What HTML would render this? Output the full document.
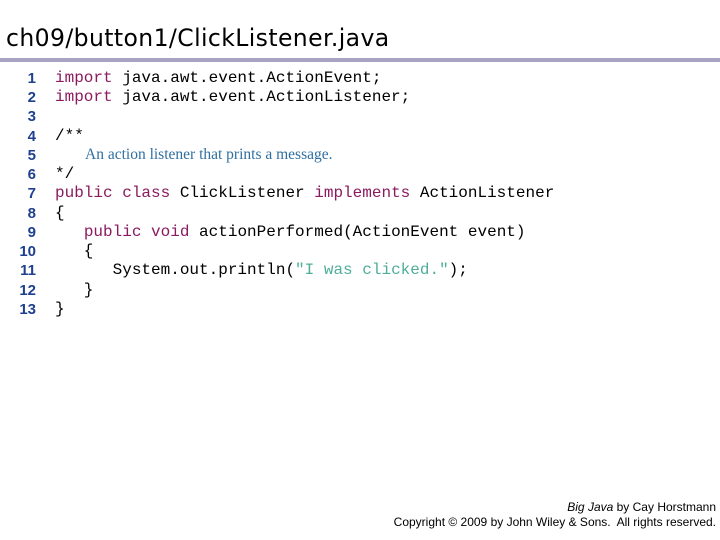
<!DOCTYPE html>
<html><head><meta charset="utf-8"><style>
body{margin:0;width:720px;height:540px;background:#fff;position:relative;overflow:hidden;font-family:"Liberation Sans",sans-serif}
.title{position:absolute;left:6px;top:24px;font-size:24px;color:#000;letter-spacing:0.4px;font-family:"DejaVu Sans","Liberation Sans",sans-serif;transform:scaleX(0.98);transform-origin:left}
.rule{position:absolute;left:0;top:58px;width:720px;height:4px;background:#a9a3c3}
.ln{position:absolute;left:0;width:36px;text-align:right;font:bold 15px "Liberation Sans",sans-serif;color:#1f3f8f}
.cd{position:absolute;left:55px;font:16px "Liberation Mono",monospace;color:#000;white-space:pre}
.k{color:#8b1a5f}.s{color:#4fae9a}
.cm{font:15.5px "Liberation Serif",serif;color:#2f6f9f}
.ft{position:absolute;right:4px;font-size:12px;color:#000;text-align:right}
</style></head><body>
<div class="title">ch09/button1/ClickListener.java</div>
<div class="rule"></div>
<div class="ln" style="top:70px">1</div><div class="cd" style="top:69px"><span class="k">import</span> java.awt.event.ActionEvent;</div>
<div class="ln" style="top:89px">2</div><div class="cd" style="top:88px"><span class="k">import</span> java.awt.event.ActionListener;</div>
<div class="ln" style="top:108px">3</div>
<div class="ln" style="top:128px">4</div><div class="cd" style="top:127px">/**</div>
<div class="ln" style="top:147px">5</div><div class="cd cm" style="top:146px;left:85px">An action listener that prints a message.</div>
<div class="ln" style="top:166px">6</div><div class="cd" style="top:165px">*/</div>
<div class="ln" style="top:185px">7</div><div class="cd" style="top:184px"><span class="k">public class</span> ClickListener <span class="k">implements</span> ActionListener</div>
<div class="ln" style="top:205px">8</div><div class="cd" style="top:204px">{</div>
<div class="ln" style="top:224px">9</div><div class="cd" style="top:223px">   <span class="k">public void</span> actionPerformed(ActionEvent event)</div>
<div class="ln" style="top:243px">10</div><div class="cd" style="top:242px">   {</div>
<div class="ln" style="top:262px">11</div><div class="cd" style="top:261px">      System.out.println(<span class="s">"I was clicked."</span>);</div>
<div class="ln" style="top:282px">12</div><div class="cd" style="top:281px">   }</div>
<div class="ln" style="top:301px">13</div><div class="cd" style="top:300px">}</div>
<div class="ft" style="top:500px"><i>Big Java</i> by Cay Horstmann</div>
<div class="ft" style="top:515px">Copyright © 2009 by John Wiley &amp; Sons.&nbsp; All rights reserved.</div>
</body></html>
